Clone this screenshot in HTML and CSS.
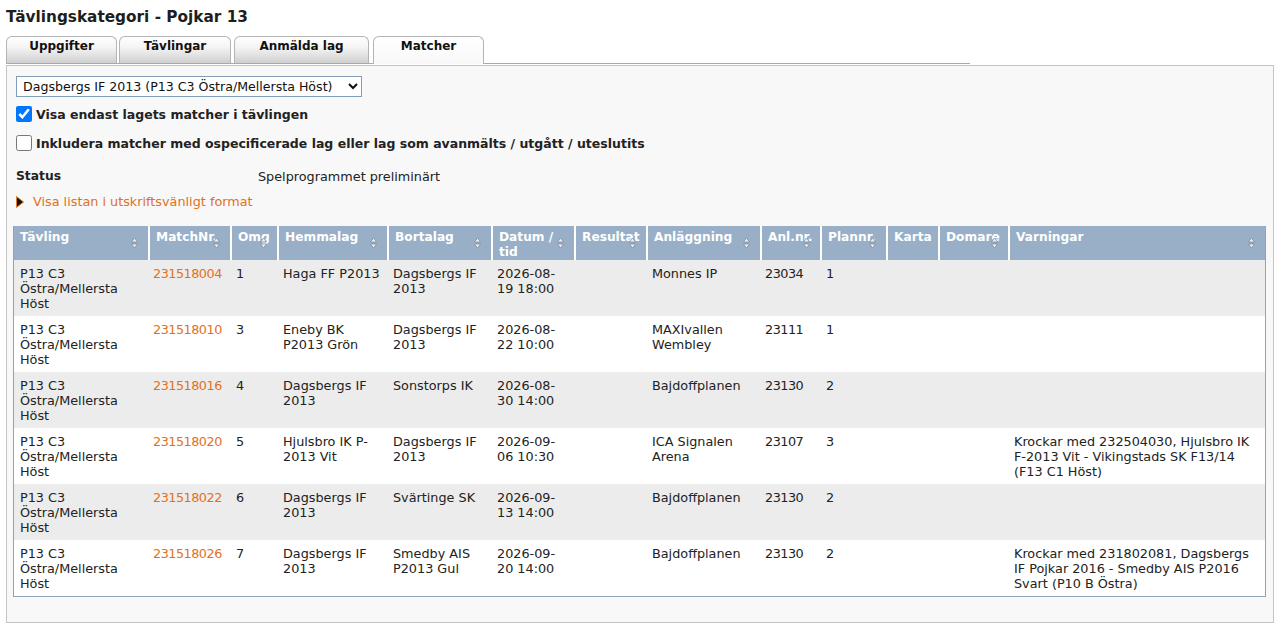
FILE: index.html
```html
<!DOCTYPE html>
<html>

<head>
    <title>Tävlingskategori - Pojkar 13</title>
    <link rel="stylesheet" href="styles.css">
</head>

<body>
    <h1>Tävlingskategori - Pojkar 13</h1>

    <div class="tabs">
        <a class="tab" href="#">Uppgifter</a>
        <a class="tab" href="#">Tävlingar</a>
        <a class="tab" href="#">Anmälda lag</a>
        <a class="tab active" href="#">Matcher</a>
    </div>

    <div class="panel">
        <div class="filters">
            <select class="team-select">
                <option>Dagsbergs IF 2013 (P13 C3 Östra/Mellersta Höst)</option>
            </select>

            <label class="check">
                <input type="checkbox" checked>
                <span>Visa endast lagets matcher i tävlingen</span>
            </label>
            <label class="check">
                <input type="checkbox">
                <span>Inkludera matcher med ospecificerade lag eller lag som avanmälts / utgått / uteslutits</span>
            </label>

            <div class="status">
                <span class="status-label">Status</span>
                <span>Spelprogrammet preliminärt</span>
            </div>

            <a class="print-link" href="#">
                <svg width="8" height="12" viewBox="0 0 8 12"><polygon points="0.5,0.5 7.5,6 0.5,11.5" fill="#111" stroke="#e07a1f" stroke-width="1"/></svg>
                Visa listan i utskriftsvänligt format
            </a>
        </div>

        <div class="table-wrap">
            <table class="matches">
                <colgroup>
                    <col style="width:135px">
                    <col style="width:82px">
                    <col style="width:47px">
                    <col style="width:110px">
                    <col style="width:104px">
                    <col style="width:83px">
                    <col style="width:72px">
                    <col style="width:114px">
                    <col style="width:60px">
                    <col style="width:66px">
                    <col style="width:52px">
                    <col style="width:70px">
                    <col>
                </colgroup>
                <thead>
                    <tr>
                        <th>Tävling<svg class="sort" viewBox="0 0 7 12"><path d="M0.5 5 L3.5 1 L6.5 5 Z M0.5 7 L3.5 11 L6.5 7 Z"/></svg></th>
                        <th>MatchNr.<svg class="sort" viewBox="0 0 7 12"><path d="M0.5 5 L3.5 1 L6.5 5 Z M0.5 7 L3.5 11 L6.5 7 Z"/></svg></th>
                        <th>Omg<svg class="sort" viewBox="0 0 7 12"><path d="M0.5 5 L3.5 1 L6.5 5 Z M0.5 7 L3.5 11 L6.5 7 Z"/></svg></th>
                        <th>Hemmalag<svg class="sort" viewBox="0 0 7 12"><path d="M0.5 5 L3.5 1 L6.5 5 Z M0.5 7 L3.5 11 L6.5 7 Z"/></svg></th>
                        <th>Bortalag<svg class="sort" viewBox="0 0 7 12"><path d="M0.5 5 L3.5 1 L6.5 5 Z M0.5 7 L3.5 11 L6.5 7 Z"/></svg></th>
                        <th>Datum / tid<svg class="sort" viewBox="0 0 7 12"><path d="M0.5 5 L3.5 1 L6.5 5 Z M0.5 7 L3.5 11 L6.5 7 Z"/></svg></th>
                        <th>Resultat<svg class="sort" viewBox="0 0 7 12"><path d="M0.5 5 L3.5 1 L6.5 5 Z M0.5 7 L3.5 11 L6.5 7 Z"/></svg></th>
                        <th>Anläggning<svg class="sort" viewBox="0 0 7 12"><path d="M0.5 5 L3.5 1 L6.5 5 Z M0.5 7 L3.5 11 L6.5 7 Z"/></svg></th>
                        <th>Anl.nr.<svg class="sort" viewBox="0 0 7 12"><path d="M0.5 5 L3.5 1 L6.5 5 Z M0.5 7 L3.5 11 L6.5 7 Z"/></svg></th>
                        <th>Plannr.<svg class="sort" viewBox="0 0 7 12"><path d="M0.5 5 L3.5 1 L6.5 5 Z M0.5 7 L3.5 11 L6.5 7 Z"/></svg></th>
                        <th>Karta</th>
                        <th>Domare<svg class="sort" viewBox="0 0 7 12"><path d="M0.5 5 L3.5 1 L6.5 5 Z M0.5 7 L3.5 11 L6.5 7 Z"/></svg></th>
                        <th>Varningar<svg class="sort" viewBox="0 0 7 12"><path d="M0.5 5 L3.5 1 L6.5 5 Z M0.5 7 L3.5 11 L6.5 7 Z"/></svg></th>
                    </tr>
                </thead>
                <tbody>
                    <tr>
                        <td>P13 C3 Östra/Mellersta Höst</td>
                        <td class="num"><a href="#">231518004</a></td>
                        <td>1</td>
                        <td>Haga FF P2013</td>
                        <td>Dagsbergs IF 2013</td>
                        <td>2026-08-19 18:00</td>
                        <td></td>
                        <td>Monnes IP</td>
                        <td class="num">23034</td>
                        <td>1</td>
                        <td></td>
                        <td></td>
                        <td></td>
                    </tr>
                    <tr>
                        <td>P13 C3 Östra/Mellersta Höst</td>
                        <td class="num"><a href="#">231518010</a></td>
                        <td>3</td>
                        <td>Eneby BK P2013 Grön</td>
                        <td>Dagsbergs IF 2013</td>
                        <td>2026-08-22 10:00</td>
                        <td></td>
                        <td>MAXIvallen Wembley</td>
                        <td class="num">23111</td>
                        <td>1</td>
                        <td></td>
                        <td></td>
                        <td></td>
                    </tr>
                    <tr>
                        <td>P13 C3 Östra/Mellersta Höst</td>
                        <td class="num"><a href="#">231518016</a></td>
                        <td>4</td>
                        <td>Dagsbergs IF 2013</td>
                        <td>Sonstorps IK</td>
                        <td>2026-08-30 14:00</td>
                        <td></td>
                        <td>Bajdoffplanen</td>
                        <td class="num">23130</td>
                        <td>2</td>
                        <td></td>
                        <td></td>
                        <td></td>
                    </tr>
                    <tr>
                        <td>P13 C3 Östra/Mellersta Höst</td>
                        <td class="num"><a href="#">231518020</a></td>
                        <td>5</td>
                        <td>Hjulsbro IK P-2013 Vit</td>
                        <td>Dagsbergs IF 2013</td>
                        <td>2026-09-06 10:30</td>
                        <td></td>
                        <td>ICA Signalen Arena</td>
                        <td class="num">23107</td>
                        <td>3</td>
                        <td></td>
                        <td></td>
                        <td>Krockar med 232504030, Hjulsbro IK F-2013 Vit - Vikingstads SK F13/14 (F13 C1 Höst)</td>
                    </tr>
                    <tr>
                        <td>P13 C3 Östra/Mellersta Höst</td>
                        <td class="num"><a href="#">231518022</a></td>
                        <td>6</td>
                        <td>Dagsbergs IF 2013</td>
                        <td>Svärtinge SK</td>
                        <td>2026-09-13 14:00</td>
                        <td></td>
                        <td>Bajdoffplanen</td>
                        <td class="num">23130</td>
                        <td>2</td>
                        <td></td>
                        <td></td>
                        <td></td>
                    </tr>
                    <tr>
                        <td>P13 C3 Östra/Mellersta Höst</td>
                        <td class="num"><a href="#">231518026</a></td>
                        <td>7</td>
                        <td>Dagsbergs IF 2013</td>
                        <td>Smedby AIS P2013 Gul</td>
                        <td>2026-09-20 14:00</td>
                        <td></td>
                        <td>Bajdoffplanen</td>
                        <td class="num">23130</td>
                        <td>2</td>
                        <td></td>
                        <td></td>
                        <td>Krockar med 231802081, Dagsbergs IF Pojkar 2016 - Smedby AIS P2016 Svart (P10 B Östra)</td>
                    </tr>
                </tbody>
            </table>
        </div>
    </div>
</body>

</html>
```

FILE: styles.css
```css
body {
    font-family: "DejaVu Sans", Verdana, sans-serif;
    font-size: 12.8px;
    color: #222;
    margin: 0;
    padding: 0 6px;
    background-color: #fff;
}

h1 {
    font-size: 15.3px;
    line-height: 18px;
    margin: 0;
    padding: 8px 0 10px;
    color: #1e1e1e;
}

/* Tabs */
.tabs {
    display: flex;
    width: 964px;
    border-bottom: 1px solid #a9a9a9;
    height: 27px;
}

.tab {
    display: block;
    box-sizing: border-box;
    width: 111px;
    height: 27px;
    border: 1px solid #b4b4b4;
    border-bottom: none;
    border-radius: 6px 6px 0 0;
    background: linear-gradient(#ffffff, #f4f4f4 40%, #cfcfcf);
    color: #111;
    font-size: 12px;
    font-weight: bold;
    text-align: center;
    line-height: 16px;
    padding-top: 1px;
    text-decoration: none;
}

.tab:nth-child(2) { width: 112px; margin-left: 2px; }
.tab:nth-child(3) { width: 135px; margin-left: 3px; }

.tab.active {
    width: 111px;
    margin-left: 4px;
    height: 28px;
    background: linear-gradient(#ffffff, #f8f8f8);
    position: relative;
    z-index: 1;
}

/* Panel */
.panel {
    margin-top: 1px;
    border: 1px solid #c4c4c4;
    background-color: #f8f8f8;
    height: 546px;
    padding: 10px 7px 0 6px;
}

.filters {
    padding-left: 3px;
}

.team-select {
    display: block;
    font-family: "DejaVu Sans", Verdana, sans-serif;
    font-size: 12.6px;
    height: 21px;
    width: 346px;
    border: 1px solid #7f9db9;
    background-color: #fff;
    color: #111;
    padding: 0 2px;
    margin: 0 0 9px;
}

.check {
    display: flex;
    align-items: center;
    gap: 4px;
    height: 16px;
    font-size: 12.5px;
    font-weight: bold;
    margin-bottom: 13px;
}

.check input {
    width: 16px;
    height: 16px;
    margin: 0;
}

.status {
    display: flex;
    line-height: 15px;
    margin-top: 18px;
    margin-bottom: 10px;
}

.status-label {
    font-size: 12.3px;
    font-weight: bold;
    width: 242px;
}

.print-link {
    display: flex;
    align-items: center;
    gap: 9px;
    line-height: 15px;
    color: #e2701d;
    text-decoration: none;
}

/* Matches table */
.table-wrap {
    margin-top: 17px;
    border: 1px solid #8ea4bc;
    border-top: none;
}

.matches {
    width: 100%;
    table-layout: fixed;
    border-collapse: collapse;
}

.matches th {
    background-color: #98afc7;
    color: #fff;
    font-size: 12.2px;
    font-weight: bold;
    text-align: left;
    vertical-align: top;
    padding: 4px 5px 0 6px;
    height: 30px;
    line-height: 15px;
    border-right: 2px solid #fff;
    position: relative;
    overflow: hidden;
}

.matches th:last-child {
    border-right: none;
}

.sort {
    position: absolute;
    right: 10px;
    top: 11px;
    width: 7px;
    height: 12px;
    fill: #eef0f3;
    stroke: #7d8da3;
    stroke-width: 0.8;
}

.matches td {
    vertical-align: top;
    padding: 6px 5px 5px 5px;
    height: 45px;
    line-height: 15px;
    word-wrap: break-word;
}

.matches td:first-child {
    padding-left: 6px;
}

.matches td.num {
    white-space: nowrap;
    letter-spacing: -0.5px;
    padding-left: 4px;
}

.matches tbody tr:nth-child(odd) {
    background-color: #ececec;
}

.matches tbody tr:nth-child(even) {
    background-color: #fff;
}

.matches td a {
    color: #e2701d;
    text-decoration: none;
}
```
